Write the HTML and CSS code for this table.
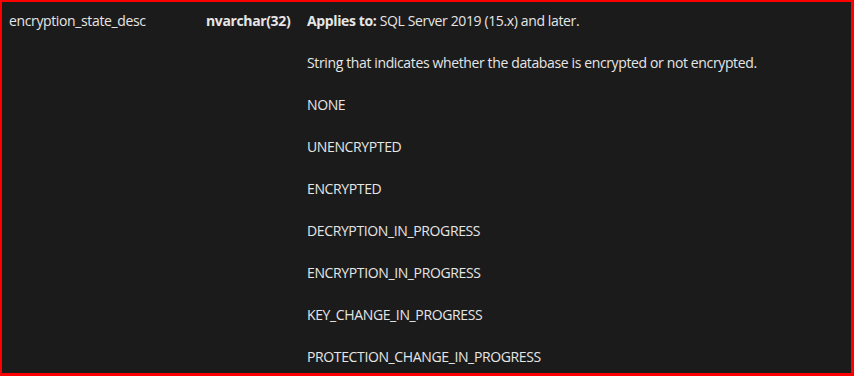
FILE: index.html
```html
<!DOCTYPE html>
<html lang="en">
<head>
  <meta charset="UTF-8" />
  <meta name="viewport" content="width=device-width, initial-scale=1.0" />
  <title>sys.dm_database_encryption_keys</title>
  <link rel="stylesheet" href="styles.css">
</head>
<body>
  <div class="frame">
    <div class="row">
      <div class="cell name">encryption_state_desc</div>
      <div class="cell type"><strong>nvarchar(32)</strong></div>
      <div class="cell desc">
        <p><strong>Applies to:</strong> SQL Server 2019 (15.x) and later.</p>
        <p>String that indicates whether the database is encrypted or not encrypted.</p>
        <p>NONE</p>
        <p>UNENCRYPTED</p>
        <p>ENCRYPTED</p>
        <p>DECRYPTION_IN_PROGRESS</p>
        <p>ENCRYPTION_IN_PROGRESS</p>
        <p>KEY_CHANGE_IN_PROGRESS</p>
        <p>PROTECTION_CHANGE_IN_PROGRESS</p>
      </div>
    </div>
  </div>
</body>
</html>
```

FILE: styles.css
```css
html, body {
  margin: 0;
  padding: 0;
  background: #1b1b1b;
}
body {
  font-family: 'Segoe UI', 'Open Sans', 'Noto Sans', sans-serif;
  font-size: 14px;
  line-height: 21px;
  letter-spacing: -0.37px;
  color: #e6e6e6;
}
.frame {
  box-sizing: border-box;
  width: 854px;
  height: 376px;
  overflow: hidden;
  border: 2px solid #ff0000;
  border-right-width: 3px;
  border-bottom-width: 3px;
  background: #1b1b1b;
}
.row {
  display: grid;
  grid-template-columns: 197px 101px 1fr;
  padding: 8px 0 0 7px;
}
.cell strong {
  font-weight: 700;
}
.desc p {
  margin: 0 0 21px 0;
}
```
